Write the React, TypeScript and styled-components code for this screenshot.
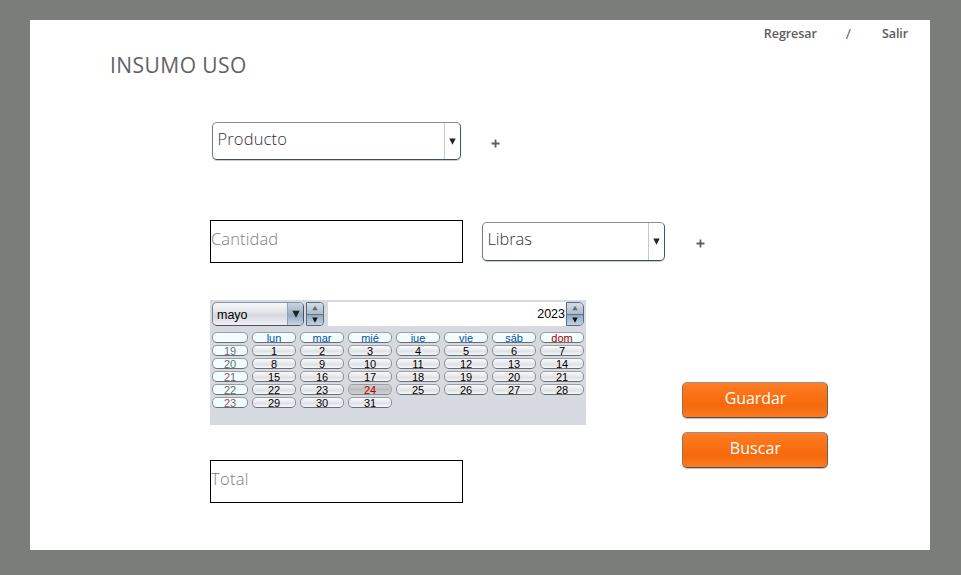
import React from "react";
import styled, { createGlobalStyle } from "styled-components";

const GlobalStyle = createGlobalStyle`
  * { box-sizing: border-box; }
  body { margin: 0; background: #7b7d7b; }
  button { font: inherit; padding: 0; border: 0; background: none; }
`;

const Page = styled.div`
  width: 961px;
  height: 575px;
  padding: 20px 31px 25px 30px;
  background: #7b7d7b;
  font-family: "Open Sans", sans-serif;
  overflow: hidden;
`;

const Panel = styled.main`
  width: 900px;
  height: 530px;
  background: #fff;
`;

const Nav = styled.nav`
  display: flex;
  justify-content: flex-end;
  height: 28px;
  padding-right: 22px;
  line-height: 27px;
  color: #5c5c60;
`;

const Label = styled.span<{ $size: number; $weight?: number; $spacing?: number }>`
  font-size: ${(p) => p.$size}px;
  font-weight: ${(p) => p.$weight ?? 300};
  letter-spacing: ${(p) => p.$spacing ?? 0}px;
  white-space: nowrap;
`;

const Slash = styled(Label)`
  margin: 0 31px 0 29px;
`;

const Title = styled.h1`
  margin: 0 0 0 80px;
  height: 34px;
  line-height: 34px;
  font-size: 21px;
  font-weight: 400;
  letter-spacing: 0.45px;
  color: #626266;
  white-space: nowrap;
`;

const ProductRow = styled.div`
  display: flex;
  margin: 40px 0 0 182px;
  height: 38px;
`;

const QuantityRow = styled.div`
  display: flex;
  margin: 60px 0 0 180px;
  height: 43px;
`;

const Select = styled.div<{ $width: number; $height: number }>`
  display: flex;
  width: ${(p) => p.$width}px;
  height: ${(p) => p.$height}px;
  border: 1px solid;
  border-color: #898e9a #415469 #3f4b59 #747b87;
  border-radius: 5px;
  box-shadow: 0 1px 1px #c5cad0;
  color: #333;
  line-height: 32px;
`;

const SelectText = styled.div`
  flex: 1;
  padding-left: 4.5px;
`;

const SelectArrow = styled.div`
  display: flex;
  align-items: center;
  justify-content: center;
  width: 16px;
  border-left: 1px solid #c0cad4;
`;

const QuantitySelect = styled(Select)`
  margin: 2px 0 0 19px;
`;

const Field = styled.div`
  width: 253px;
  height: 43px;
  border: 1px solid #000;
  line-height: 36px;
  color: #7e7e80;
`;

const AddButton = styled.button<{ $top: number; $left: number }>`
  display: flex;
  width: 9px;
  height: 9px;
  margin: ${(p) => p.$top}px 0 0 ${(p) => p.$left}px;
`;

const Lower = styled.div`
  display: flex;
  margin: 37px 0 0 180px;
`;

const LeftColumn = styled.div`
  display: flex;
  flex-direction: column;
  gap: 35px;
  width: 376px;
`;

const Actions = styled.div`
  display: flex;
  flex-direction: column;
  gap: 14px;
  margin: 82px 0 0 96px;
`;

const ActionButton = styled.button`
  width: 146px;
  height: 36px;
  padding: 0 0 4px 1px;
  border: 1px solid;
  border-color: #9a8f8b #6a625e #55504f #8b7468;
  border-radius: 5px;
  box-shadow: 0 1px 1px #b9bdc3;
  background: linear-gradient(#ff7f27 0, #fd761b 20%, #f96d11 50%, #f66a0e 68%, #ff7b21 100%);
  color: #fff;
  line-height: 30px;
  display: block;
  text-align: center;
`;

const Calendar = styled.section`
  height: 125px;
  padding: 2px;
  background: #d6d9df;
  font-family: "Liberation Sans", Arial, sans-serif;
  color: #000;
`;

const CalendarHeader = styled.div`
  display: flex;
  height: 24px;
  font-size: 12.5px;
`;

const Month = styled.div`
  display: flex;
  width: 92px;
  height: 24px;
  border: 1px solid;
  border-color: #8d929b #415469 #50555d #7c828c;
  border-radius: 5px;
  background: linear-gradient(#f7f8fa, #dfe2e6 45%, #d5d8de 55%, #eef0f4);
  overflow: hidden;
  line-height: 24px;
`;

const MonthName = styled.span`
  flex: 1;
  padding-left: 4px;
`;

const MonthArrow = styled.span`
  display: flex;
  align-items: center;
  justify-content: center;
  width: 16px;
  border-left: 1px solid #8fa3b6;
  background: linear-gradient(#c9d6e2, #a1b4c6 45%, #94a9bd 55%, #c3d5e5);
`;

const Spinner = styled.div`
  display: flex;
  flex-direction: column;
  width: 18px;
  height: 24px;
  border: 1px solid #596b7f;
  border-radius: 0 5px 5px 0;
  overflow: hidden;
`;

const MonthSpinner = styled(Spinner)`
  margin: 0 4px 0 2px;
  border-radius: 1px 4px 4px 1px;
`;

const SpinHalf = styled.span<{ $lower?: boolean }>`
  display: flex;
  flex: 1;
  align-items: center;
  justify-content: center;
  border-top: ${(p) => (p.$lower ? "1px solid #5d7389" : "0")};
  background: ${(p) =>
    p.$lower ? "linear-gradient(#93a9bd, #c1d2e2)" : "linear-gradient(#d3dce5, #adbccb)"};
`;

const Year = styled.div`
  flex: 1;
  background: #fff;
  text-align: right;
  line-height: 25px;
  padding-right: 1px;
`;

const DayGrid = styled.div`
  display: grid;
  grid-template-columns: 36px repeat(7, 44px);
  grid-auto-rows: 12px;
  gap: 1px 4px;
  margin-top: 6px;
`;

type Kind = "day" | "head" | "sunday" | "week" | "selected";

const inks: Record<Kind, string> = {
  day: "#000",
  head: "#0057a4",
  sunday: "#a40000",
  week: "#687078",
  selected: "#b00000",
};

const Cell = styled.div<{ $kind: Kind; $ink?: string }>`
  height: 11px;
  border: 1px solid;
  border-color: ${(p) =>
    p.$kind === "selected" ? "#9a9da1 #a8aaae #86898d" : "#9a9ea5 #8b9096 #696e75"};
  border-radius: 5px;
  background: ${(p) =>
    p.$kind === "day"
      ? "linear-gradient(#fafbfc, #e6e8ec 45%, #dfe1e6 60%, #f7f8fa)"
      : p.$kind === "selected"
        ? "linear-gradient(#d2d2d2, #bdbdbd 50%, #d0d0d0)"
        : "#f3fcff"};
  color: ${(p) => p.$ink ?? inks[p.$kind]};
  font-size: 11px;
  line-height: 10px;
  text-align: center;
  overflow: hidden;
`;

const Triangle = ({ size = 7, up = false, color = "#222" }: { size?: number; up?: boolean; color?: string }) => (
  <svg width={size} height={size} viewBox="0 0 7 7">
    <path d={up ? "M0.3 6 3.5 1 6.7 6Z" : "M0.3 0.6H6.7L3.5 6.7Z"} fill={color} />
  </svg>
);

const Plus = () => (
  <svg width="9" height="9" viewBox="0 0 9 9">
    <path d="M4.5 0.5V8.5M0.5 4.5H8.5" stroke="#5c6064" strokeWidth="1.8" />
  </svg>
);

const SpinArrows = () => (
  <>
    <SpinHalf><Triangle size={6} up color="#626d78" /></SpinHalf>
    <SpinHalf $lower><Triangle size={6} color="#111" /></SpinHalf>
  </>
);

const weekdays = ["lun", "mar", "mié", "jue", "vie", "sáb", "dom"];
const weekInks = ["#667078", "#5d7368", "#80646c", "#5d7360", "#80605d"];
const weeks = [19, 20, 21, 22, 23].map((week, row) => ({
  week,
  ink: weekInks[row],
  days: Array.from({ length: 7 }, (_, i) => row * 7 + i + 1).filter((d) => d <= 31),
}));

export default function App() {
  return (
    <Page>
      <GlobalStyle />
      <Panel>
        <Nav>
          <Label $size={12.5} $weight={600} $spacing={-0.05}>Regresar</Label>
          <Slash $size={14} $weight={400}>/</Slash>
          <Label $size={12.5} $weight={600} $spacing={-0.1}>Salir</Label>
        </Nav>
        <Title>INSUMO USO</Title>
        <ProductRow>
          <Select $width={249} $height={38}>
            <SelectText><Label $size={16.5} $spacing={0.15}>Producto</Label></SelectText>
            <SelectArrow><Triangle /></SelectArrow>
          </Select>
          <AddButton $top={17} $left={30} aria-label="Agregar producto"><Plus /></AddButton>
        </ProductRow>
        <QuantityRow>
          <Field><Label $size={16.5} $spacing={0.1}>Cantidad</Label></Field>
          <QuantitySelect $width={183} $height={39}>
            <SelectText><Label $size={16.5} $spacing={-0.1}>Libras</Label></SelectText>
            <SelectArrow><Triangle /></SelectArrow>
          </QuantitySelect>
          <AddButton $top={19} $left={31} aria-label="Agregar unidad"><Plus /></AddButton>
        </QuantityRow>
        <Lower>
          <LeftColumn>
            <Calendar>
              <CalendarHeader>
                <Month>
                  <MonthName>mayo</MonthName>
                  <MonthArrow><Triangle size={8} /></MonthArrow>
                </Month>
                <MonthSpinner><SpinArrows /></MonthSpinner>
                <Year>2023</Year>
                <Spinner><SpinArrows /></Spinner>
              </CalendarHeader>
              <DayGrid>
                <Cell $kind="head" />
                {weekdays.map((d) => (
                  <Cell key={d} $kind={d === "dom" ? "sunday" : "head"}>{d}</Cell>
                ))}
                {weeks.map(({ week, ink, days }) => (
                  <React.Fragment key={week}>
                    <Cell $kind="week" $ink={ink}>{week}</Cell>
                    {days.map((d) => (
                      <Cell key={d} $kind={d === 24 ? "selected" : "day"}>{d}</Cell>
                    ))}
                  </React.Fragment>
                ))}
              </DayGrid>
            </Calendar>
            <Field><Label $size={16.5} $spacing={0.3}>Total</Label></Field>
          </LeftColumn>
          <Actions>
            <ActionButton><Label $size={16} $weight={400} $spacing={-0.1}>Guardar</Label></ActionButton>
            <ActionButton><Label $size={16} $weight={400} $spacing={0.1}>Buscar</Label></ActionButton>
          </Actions>
        </Lower>
      </Panel>
    </Page>
  );
}
